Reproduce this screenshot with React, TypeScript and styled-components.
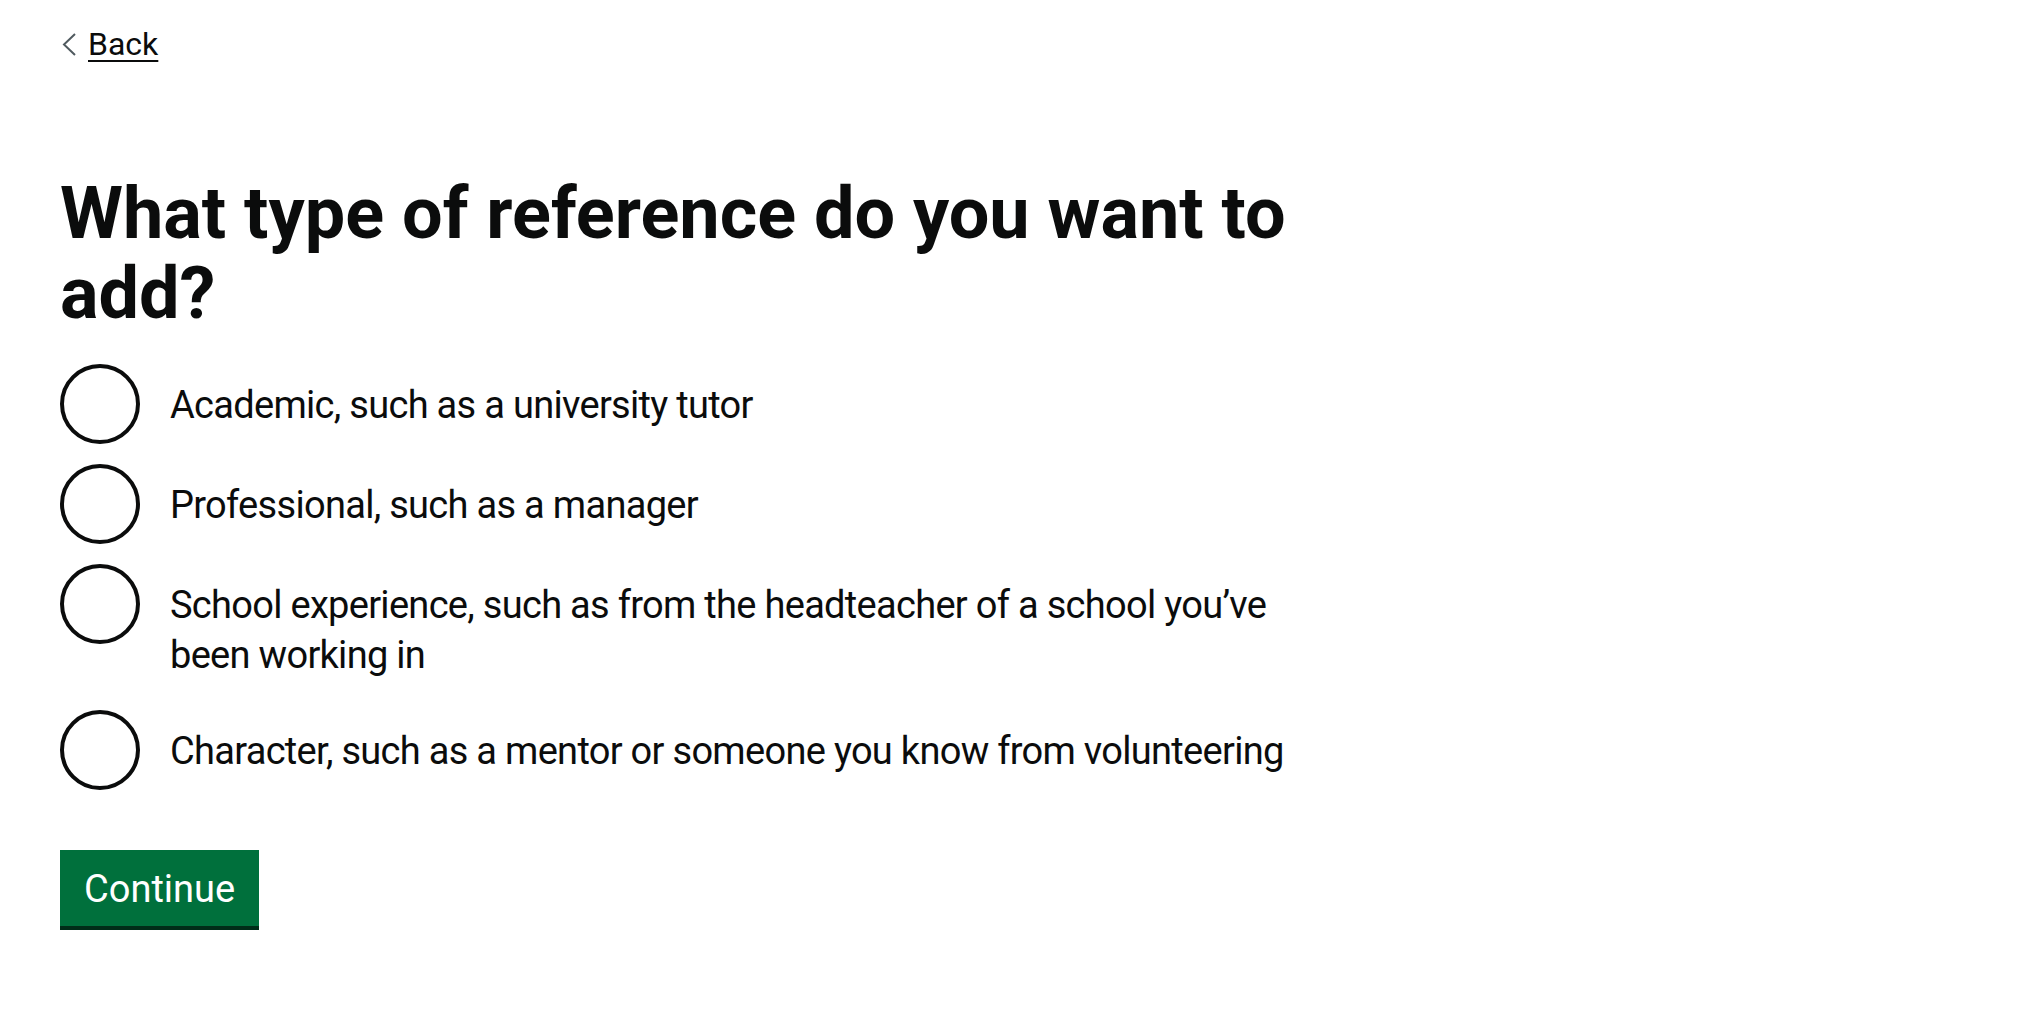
import React from 'react'
import styled, { createGlobalStyle } from 'styled-components'

const GlobalStyle = createGlobalStyle`
  html, body {
    margin: 0;
    padding: 0;
    background: #ffffff;
  }

  body {
    font-family: Roboto, "Liberation Sans", Arial, sans-serif;
    color: #0b0c0c;
    -webkit-font-smoothing: antialiased;
  }

  * {
    box-sizing: border-box;
  }
`

const WidthContainer = styled.div`
  margin: 0 60px;
`

const BackLink = styled.a`
  display: inline-flex;
  align-items: center;
  margin-top: 24px;
  margin-bottom: 30px;
  font-size: 32px;
  line-height: 40px;
  color: #0b0c0c;
  text-decoration: underline;
  text-decoration-thickness: 2px;
  text-underline-offset: 0.16em;
  cursor: pointer;

  svg {
    flex-shrink: 0;
  }
`

const MainWrapper = styled.main`
  padding-top: 80px;
  padding-bottom: 80px;
`

const TwoThirds = styled.div`
  max-width: 1270px;
`

const Fieldset = styled.fieldset`
  margin: 0;
  padding: 0;
  border: 0;
  min-width: 0;
`

const Legend = styled.legend`
  padding: 0;
  margin-bottom: 30px;
`

const Heading = styled.h1`
  margin: 0;
  font-size: 72px;
  line-height: 80px;
  font-weight: 700;
  letter-spacing: 0;
`

const Radios = styled.div`
  display: flex;
  flex-direction: column;
  gap: 20px;
  margin-bottom: 60px;
`

const RadioItem = styled.label`
  display: flex;
  align-items: flex-start;
  min-height: 80px;
  cursor: pointer;
`

const RadioCircle = styled.span<{ $checked?: boolean }>`
  flex-shrink: 0;
  width: 80px;
  height: 80px;
  border: 4px solid #0b0c0c;
  border-radius: 50%;
  background: ${p => (p.$checked ? 'radial-gradient(circle, #0b0c0c 0 20px, #fff 21px)' : '#fff')};
`

const RadioLabel = styled.span`
  padding: 16px 10px 10px 30px;
  font-size: 38px;
  line-height: 50px;
  letter-spacing: -0.7px;
`

const Button = styled.button`
  display: inline-block;
  margin: 0;
  padding: 16px 20px 14px;
  border: 4px solid transparent;
  border-radius: 0;
  background-color: #00703c;
  box-shadow: 0 4px 0 #002d18;
  color: #ffffff;
  font-family: inherit;
  font-size: 38px;
  line-height: 1;
  cursor: pointer;
`

const Chevron = () => (
  <svg width="28" height="40" viewBox="0 0 28 40" aria-hidden="true">
    <polyline points="15,10 4,20.5 15,31" fill="none" stroke="#505a5f" strokeWidth="2" />
  </svg>
)

const options = [
  'Academic, such as a university tutor',
  'Professional, such as a manager',
  'School experience, such as from the headteacher of a school you’ve been working in',
  'Character, such as a mentor or someone you know from volunteering',
]

export default function App() {
  return (
    <>
      <GlobalStyle />
      <WidthContainer>
        <BackLink>
          <Chevron />
          Back
        </BackLink>
        <MainWrapper>
          <TwoThirds>
            <form onSubmit={e => e.preventDefault()}>
              <Fieldset>
                <Legend>
                  <Heading>What type of reference do you want to add?</Heading>
                </Legend>
                <Radios>
                  {options.map(option => (
                    <RadioItem key={option}>
                      <RadioCircle />
                      <RadioLabel>{option}</RadioLabel>
                    </RadioItem>
                  ))}
                </Radios>
              </Fieldset>
              <Button type="submit">Continue</Button>
            </form>
          </TwoThirds>
        </MainWrapper>
      </WidthContainer>
    </>
  )
}
